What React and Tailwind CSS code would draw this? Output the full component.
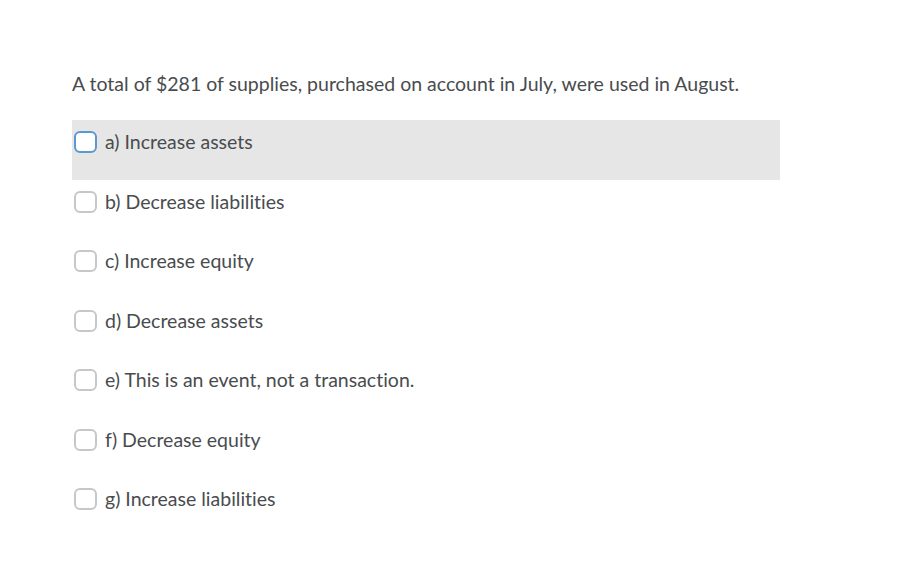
const options = [
  'a) Increase assets',
  'b) Decrease liabilities',
  'c) Increase equity',
  'd) Decrease assets',
  'e) This is an event, not a transaction.',
  'f) Decrease equity',
  'g) Increase liabilities',
]

export default function App() {
  return (
    <div
      className="min-h-screen bg-white text-[#494c4e] [font-variant-ligatures:none]"
      style={{ fontFamily: 'Lato, "Noto Sans", sans-serif' }}
    >
      <div className="pl-[72px] pt-[70px] w-[780px]">
        <p className="text-[19.5px] leading-[28px]">
          A total of $281 of supplies, purchased on account in July, were used in August.
        </p>
        <div className="mt-[22px]">
          {options.map((opt, i) => (
            <label
              key={opt}
              className={`block h-[59.5px] pl-[2px] pt-[11px] ${i === 0 ? 'bg-[#e6e6e6]' : ''}`}
            >
              <span className="flex items-center gap-[8px] h-[22px]">
                <span
                  className={`w-[23px] h-[22px] rounded-[6px] border-2 bg-white ${
                    i === 0 ? 'border-[#5b98d0]' : 'border-[#c5c7c9]'
                  }`}
                />
                <span className="text-[19.5px]">{opt}</span>
              </span>
            </label>
          ))}
        </div>
      </div>
    </div>
  )
}
